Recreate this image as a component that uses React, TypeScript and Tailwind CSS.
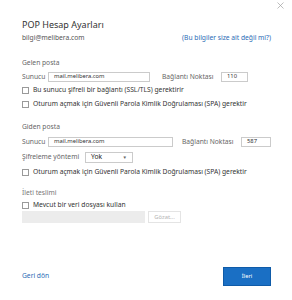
const font = "font-['Noto_Sans','Open_Sans',sans-serif]";

function Checkbox({ label }: { label: string }) {
  return (
    <label className="flex items-center gap-[4px] h-[10px]">
      <span className="w-[7px] h-[7px] border border-[#9a9a9a] bg-white shrink-0" />
      <span className="text-[6.7px] leading-[10px] text-[#333] whitespace-nowrap">{label}</span>
    </label>
  );
}

function TextInput({ value, width }: { value: string; width: string }) {
  return (
    <div className={`${width} h-[10px] border border-[#cbcbcb] bg-white flex items-center pl-[5px]`}>
      <span className="text-[5.8px] leading-none text-[#333] whitespace-nowrap">{value}</span>
    </div>
  );
}

export default function App() {
  return (
    <div className={`relative w-[292px] h-[300px] bg-white overflow-hidden ${font}`}>
      {/* Close */}
      <button className="absolute top-[0px] right-[7px] w-[10px] h-[10px] flex items-center justify-center">
        <svg width="7" height="7" viewBox="0 0 7 7" stroke="#a0a0a0" strokeWidth="0.7">
          <path d="M0.5 0.5 L6.5 6.5 M6.5 0.5 L0.5 6.5" />
        </svg>
      </button>

      <div className="flex flex-col pl-[22px] pr-[21px] pt-[19px] h-full">
        <div className="text-[9px] leading-[12px] text-[#333]">POP Hesap Ayarları</div>
        <div className="flex justify-between items-center mt-[2px] h-[10px]">
          <span className="text-[6.7px] text-[#555]">bilgi@melibera.com</span>
          <span className="text-[6.7px] text-[#2a6cb6]">(Bu bilgiler size ait değil mi?)</span>
        </div>

        {/* Gelen posta */}
        <div className="mt-[15px] text-[6.7px] leading-[10px] text-[#666]">Gelen posta</div>
        <div className="mt-[4px] flex items-center h-[10px]">
          <span className="w-[26px] text-[6.7px] text-[#666]">Sunucu</span>
          <TextInput value="mail.melibera.com" width="w-[102px]" />
          <span className="ml-[12px] w-[59px] text-[6.7px] text-[#666] whitespace-nowrap">Bağlantı Noktası</span>
          <TextInput value="110" width="w-[27px]" />
        </div>
        <div className="mt-[3px]">
          <Checkbox label="Bu sunucu şifreli bir bağlantı (SSL/TLS) gerektirir" />
        </div>
        <div className="mt-[4px]">
          <Checkbox label="Oturum açmak için Güvenli Parola Kimlik Doğrulaması (SPA) gerektir" />
        </div>

        {/* Giden posta */}
        <div className="mt-[13px] text-[6.7px] leading-[10px] text-[#666]">Giden posta</div>
        <div className="mt-[5px] flex items-center h-[10px]">
          <span className="w-[26px] text-[6.7px] text-[#666]">Sunucu</span>
          <TextInput value="mail.melibera.com" width="w-[125px]" />
          <span className="ml-[9px] w-[59px] text-[6.7px] text-[#666] whitespace-nowrap">Bağlantı Noktası</span>
          <TextInput value="587" width="w-[30px]" />
        </div>
        <div className="mt-[5px] flex items-center h-[11px]">
          <span className="w-[63px] text-[6.7px] text-[#666]">Şifreleme yöntemi</span>
          <div className="w-[48px] h-[11px] border border-[#cbcbcb] flex items-center justify-between pl-[5px] pr-[5px]">
            <span className="text-[6.7px] text-[#222]">Yok</span>
            <span className="text-[4.5px] text-[#666]">▼</span>
          </div>
        </div>
        <div className="mt-[4px]">
          <Checkbox label="Oturum açmak için Güvenli Parola Kimlik Doğrulaması (SPA) gerektir" />
        </div>

        {/* İleti teslimi */}
        <div className="mt-[11px] text-[6.7px] leading-[10px] text-[#777]">İleti teslimi</div>
        <div className="mt-[2px]">
          <Checkbox label="Mevcut bir veri dosyası kullan" />
        </div>
        <div className="mt-[1px] flex items-center gap-[3px]">
          <div className="w-[123px] h-[12px] bg-[#ececec]" />
          <div className="w-[33px] h-[12px] border border-[#e4e4e4] flex items-center justify-center">
            <span className="text-[5.8px] text-[#b4b4b4]">Gözat...</span>
          </div>
        </div>

        {/* Footer */}
        <div className="mt-auto mb-[14px] flex items-center justify-between">
          <span className="text-[6.7px] text-[#2a6cb6]">Geri dön</span>
          <button className="w-[48px] h-[19px] bg-[#1a6fc4] border border-[#0f5ba8] flex items-center justify-center">
            <span className="text-[5.8px] text-white">İleri</span>
          </button>
        </div>
      </div>
    </div>
  );
}
